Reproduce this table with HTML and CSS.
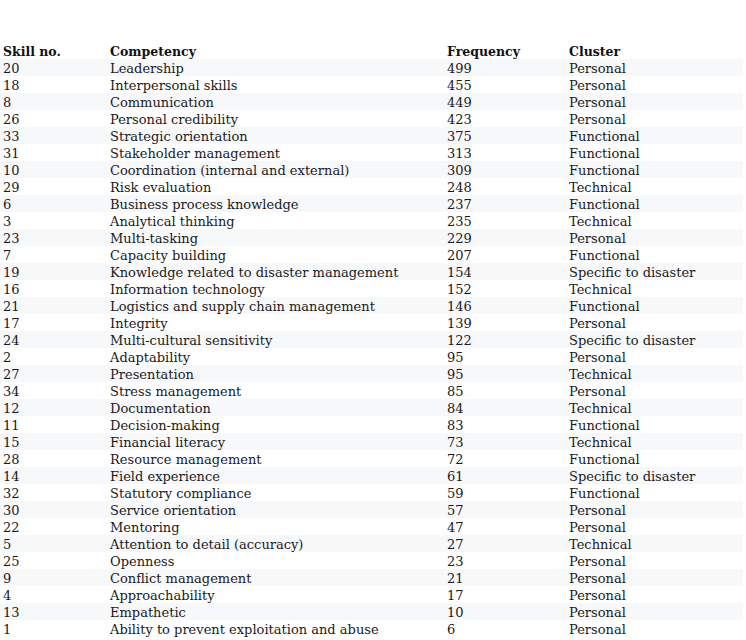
FILE: index.html
```html
<!DOCTYPE html>
<html lang="en">
<head>
<meta charset="utf-8">
<title>Competencies</title>
<link rel="stylesheet" href="styles.css">
</head>
<body>
<table class="skills">
<colgroup>
<col class="c-no"><col class="c-comp"><col class="c-freq"><col class="c-cluster">
</colgroup>
<thead>
<tr><th>Skill no.</th><th>Competency</th><th>Frequency</th><th>Cluster</th></tr>
</thead>
<tbody>
<tr><td>20</td><td>Leadership</td><td>499</td><td>Personal</td></tr>
<tr><td>18</td><td>Interpersonal skills</td><td>455</td><td>Personal</td></tr>
<tr><td>8</td><td>Communication</td><td>449</td><td>Personal</td></tr>
<tr><td>26</td><td>Personal credibility</td><td>423</td><td>Personal</td></tr>
<tr><td>33</td><td>Strategic orientation</td><td>375</td><td>Functional</td></tr>
<tr><td>31</td><td>Stakeholder management</td><td>313</td><td>Functional</td></tr>
<tr><td>10</td><td>Coordination (internal and external)</td><td>309</td><td>Functional</td></tr>
<tr><td>29</td><td>Risk evaluation</td><td>248</td><td>Technical</td></tr>
<tr><td>6</td><td>Business process knowledge</td><td>237</td><td>Functional</td></tr>
<tr><td>3</td><td>Analytical thinking</td><td>235</td><td>Technical</td></tr>
<tr><td>23</td><td>Multi-tasking</td><td>229</td><td>Personal</td></tr>
<tr><td>7</td><td>Capacity building</td><td>207</td><td>Functional</td></tr>
<tr><td>19</td><td>Knowledge related to disaster management</td><td>154</td><td>Specific to disaster</td></tr>
<tr><td>16</td><td>Information technology</td><td>152</td><td>Technical</td></tr>
<tr><td>21</td><td>Logistics and supply chain management</td><td>146</td><td>Functional</td></tr>
<tr><td>17</td><td>Integrity</td><td>139</td><td>Personal</td></tr>
<tr><td>24</td><td>Multi-cultural sensitivity</td><td>122</td><td>Specific to disaster</td></tr>
<tr><td>2</td><td>Adaptability</td><td>95</td><td>Personal</td></tr>
<tr><td>27</td><td>Presentation</td><td>95</td><td>Technical</td></tr>
<tr><td>34</td><td>Stress management</td><td>85</td><td>Personal</td></tr>
<tr><td>12</td><td>Documentation</td><td>84</td><td>Technical</td></tr>
<tr><td>11</td><td>Decision-making</td><td>83</td><td>Functional</td></tr>
<tr><td>15</td><td>Financial literacy</td><td>73</td><td>Technical</td></tr>
<tr><td>28</td><td>Resource management</td><td>72</td><td>Functional</td></tr>
<tr><td>14</td><td>Field experience</td><td>61</td><td>Specific to disaster</td></tr>
<tr><td>32</td><td>Statutory compliance</td><td>59</td><td>Functional</td></tr>
<tr><td>30</td><td>Service orientation</td><td>57</td><td>Personal</td></tr>
<tr><td>22</td><td>Mentoring</td><td>47</td><td>Personal</td></tr>
<tr><td>5</td><td>Attention to detail (accuracy)</td><td>27</td><td>Technical</td></tr>
<tr><td>25</td><td>Openness</td><td>23</td><td>Personal</td></tr>
<tr><td>9</td><td>Conflict management</td><td>21</td><td>Personal</td></tr>
<tr><td>4</td><td>Approachability</td><td>17</td><td>Personal</td></tr>
<tr><td>13</td><td>Empathetic</td><td>10</td><td>Personal</td></tr>
<tr><td>1</td><td>Ability to prevent exploitation and abuse</td><td>6</td><td>Personal</td></tr>
</tbody>
</table>
</body>
</html>
```

FILE: styles.css
```css
html, body {
  margin: 0;
  padding: 0;
  background: #ffffff;
}
body {
  padding-top: 42px;
  font-family: "DejaVu Serif", "Liberation Serif", serif;
  font-size: 13px;
  color: #1a1a1a;
}
.skills {
  width: 743px;
  border-collapse: collapse;
  table-layout: fixed;
}
.c-no { width: 107px; }
.c-comp { width: 337px; }
.c-freq { width: 122px; }
.c-cluster { width: 177px; }
.skills th,
.skills td {
  height: 17px;
  padding: 2px 3px 0;
  text-align: left;
  vertical-align: middle;
  line-height: 15px;
  white-space: nowrap;
  box-sizing: border-box;
}
.skills th {
  font-weight: bold;
  font-size: 12.5px;
  color: #111111;
}
.skills tbody tr:nth-child(odd) {
  background: #f7f8fa;
}
```
